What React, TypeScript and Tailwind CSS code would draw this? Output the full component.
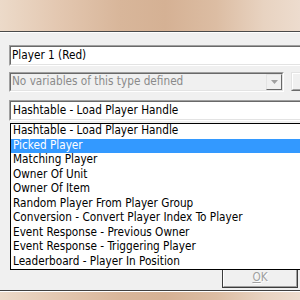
import React from "react";

const items = [
  "Hashtable - Load Player Handle",
  "Picked Player",
  "Matching Player",
  "Owner Of Unit",
  "Owner Of Item",
  "Random Player From Player Group",
  "Conversion - Convert Player Index To Player",
  "Event Response - Previous Owner",
  "Event Response - Triggering Player",
  "Leaderboard - Player In Position",
];

function Sunken({
  className,
  inner,
  children,
}: {
  className: string;
  inner: string;
  children?: React.ReactNode;
}) {
  return (
    <div
      className={
        "shrink-0 border border-t-[#a0a0a0] border-l-[#a0a0a0] border-b-white border-r-white " +
        className
      }
    >
      <div
        className={
          "h-full border border-t-[#696969] border-l-[#696969] border-b-[#e3e3e3] border-r-[#e3e3e3] flex items-center " +
          inner
        }
      >
        {children}
      </div>
    </div>
  );
}

export default function App() {
  return (
    <div
      className="w-[300px] h-[300px] overflow-hidden flex flex-col bg-[#f0f0f0] text-[11.7px] text-black"
      style={{ fontFamily: '"DejaVu Sans Condensed", "Liberation Sans", sans-serif' }}
    >
      <div className="h-[31px] shrink-0 bg-[linear-gradient(90deg,#ecdac9_0%,#e3c7b0_20%,#d8b69a_40%,#d5b194_55%,#dcbda3_72%,#e8d3c1_88%,#eddcce_100%)]" />
      <div className="h-px shrink-0 bg-[#4a4a4a]" />
      <div className="h-px shrink-0 bg-white" />

      <div className="relative flex-1 flex flex-col pl-[9px] pt-[12px]">
        <Sunken className="w-[300px] h-[21px]" inner="bg-white pl-[1px]">
          <span className="whitespace-nowrap">Player 1 (Red)</span>
        </Sunken>

        <div className="mt-[6px] flex items-start">
          <Sunken className="w-[275px] h-[20px]" inner="bg-[#f0f0f0] pl-[1px] justify-between">
            <span className="whitespace-nowrap text-[#8a8a8a]">No variables of this type defined</span>
            <div className="w-[16px] h-[16px] border border-t-[#e3e3e3] border-l-[#e3e3e3] border-b-[#696969] border-r-[#696969] flex items-center justify-center">
              <svg width="7" height="4" viewBox="0 0 7 4">
                <path d="M0 0H7L3.5 4Z" fill="#a0a0a0" />
              </svg>
            </div>
          </Sunken>
          <div className="ml-[7px] w-[30px] h-[19px] shrink-0 border border-t-[#e3e3e3] border-l-[#e3e3e3] border-b-[#696969] border-r-[#696969]">
            <div className="h-full border border-t-white border-l-white border-b-[#a0a0a0] border-r-[#a0a0a0]" />
          </div>
        </div>

        <Sunken className="mt-[8px] w-[300px] h-[21px]" inner="bg-white pl-[2px]">
          <span className="whitespace-nowrap">Hashtable - Load Player Handle</span>
        </Sunken>

        <div className="absolute left-[10px] top-[90px] z-10 w-[300px] border border-black bg-white flex flex-col">
          {items.map((it, i) => (
            <div
              key={it}
              className={
                "h-[14.5px] flex items-center pl-[2px] whitespace-nowrap " +
                (i === 1 ? "bg-[#3399ff] text-white" : "")
              }
            >
              {it}
            </div>
          ))}
        </div>

        <div className="mt-auto mb-[2px] ml-[213px] w-[76px] h-[20px] shrink-0 border border-[#3c3c3c]">
          <div className="h-full border border-t-white border-l-white border-b-[#a0a0a0] border-r-[#a0a0a0] flex items-center justify-center">
            <span className="text-[#a0a0a0] [text-shadow:1px_1px_0_#ffffff]">
              <span className="underline">O</span>K
            </span>
          </div>
        </div>
      </div>

      <div className="h-px shrink-0 bg-[#404040]" />
      <div className="h-px shrink-0 bg-white" />
      <div className="h-[8px] shrink-0 bg-[linear-gradient(90deg,#ecdac9_0%,#e3c7b0_20%,#d8b69a_40%,#d5b194_55%,#dcbda3_72%,#e8d3c1_88%,#eddcce_100%)]" />
    </div>
  );
}
